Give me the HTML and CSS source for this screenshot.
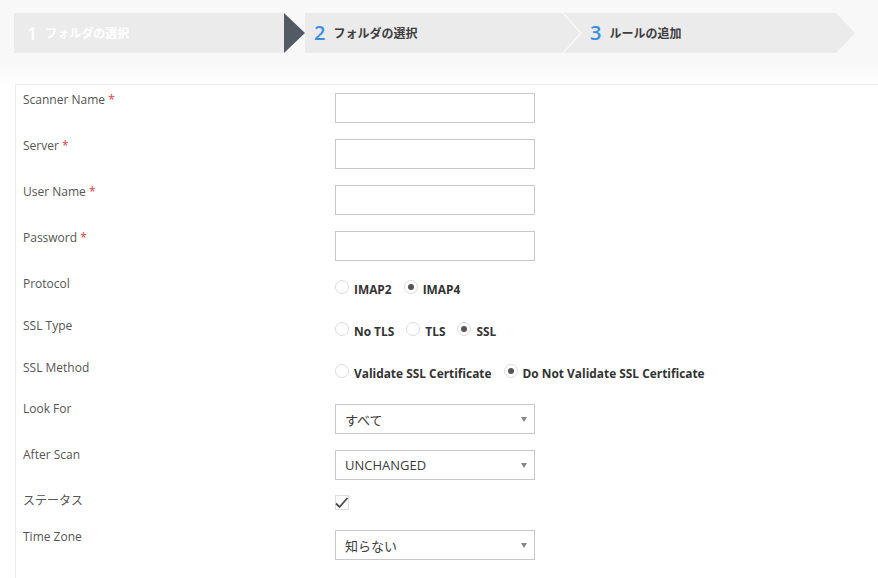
FILE: index.html
```html
<!DOCTYPE html>
<html>
<head>
<meta charset="utf-8">
<link rel="stylesheet" href="styles.css">
</head>
<body>
<div class="top">
  <div class="wizard">
    <div class="step step-done"><span class="num">1</span><span class="txt">フォルダの選択</span></div>
    <div class="tri"></div>
    <div class="step step-active"><span class="num">2</span><span class="txt">フォルダの選択</span></div>
    <div class="step step-next"><span class="num">3</span><span class="txt">ルールの追加</span></div>
  </div>
</div>
<div class="panel">
  <div class="row r-text">
    <div class="label">Scanner Name <span class="req">*</span></div>
    <div class="ctl"><input class="inp" type="text"></div>
  </div>
  <div class="row r-text">
    <div class="label">Server <span class="req">*</span></div>
    <div class="ctl"><input class="inp" type="text"></div>
  </div>
  <div class="row r-text">
    <div class="label">User Name <span class="req">*</span></div>
    <div class="ctl"><input class="inp" type="text"></div>
  </div>
  <div class="row r-text">
    <div class="label">Password <span class="req">*</span></div>
    <div class="ctl"><input class="inp" type="password"></div>
  </div>
  <div class="row r-radio">
    <div class="label">Protocol</div>
    <div class="ctl radios">
      <span class="opt"><span class="radio"></span>IMAP2</span>
      <span class="opt"><span class="radio on"></span>IMAP4</span>
    </div>
  </div>
  <div class="row r-radio">
    <div class="label">SSL Type</div>
    <div class="ctl radios">
      <span class="opt"><span class="radio"></span>No TLS</span>
      <span class="opt"><span class="radio"></span>TLS</span>
      <span class="opt"><span class="radio on"></span>SSL</span>
    </div>
  </div>
  <div class="row r-radio2">
    <div class="label">SSL Method</div>
    <div class="ctl radios">
      <span class="opt"><span class="radio"></span>Validate SSL Certificate</span>
      <span class="opt"><span class="radio on"></span>Do Not Validate SSL Certificate</span>
    </div>
  </div>
  <div class="row r-sel1">
    <div class="label">Look For</div>
    <div class="ctl"><div class="sel"><span>すべて</span><span class="caret"></span></div></div>
  </div>
  <div class="row r-sel2">
    <div class="label">After Scan</div>
    <div class="ctl"><div class="sel"><span>UNCHANGED</span><span class="caret"></span></div></div>
  </div>
  <div class="row r-check">
    <div class="label">ステータス</div>
    <div class="ctl"><div class="check"><svg width="16" height="14" viewBox="0 0 16 14"><path d="M2 7.5 L5.5 11 L13.5 2" fill="none" stroke="#4a4a4a" stroke-width="1.8"/></svg></div></div>
  </div>
  <div class="row r-sel3">
    <div class="label">Time Zone</div>
    <div class="ctl"><div class="sel"><span>知らない</span><span class="caret"></span></div></div>
  </div>
</div>
</body>
</html>
```
FILE: styles.css
```css
* { box-sizing: border-box; }
html, body { margin: 0; padding: 0; background: #fff; }
body {
  font-family: "Open Sans", "Noto Sans CJK JP", sans-serif;
  font-size: 12px;
  color: #555;
  width: 878px;
  height: 578px;
  overflow: hidden;
}
.top {
  height: 84px;
  padding-top: 13px;
  background: linear-gradient(#f8f8f8 0, #f8f8f8 62px, #fefefe 84px);
}
.wizard {
  display: flex;
  margin-left: 14px;
  height: 40px;
}
.step {
  height: 40px;
  background: #ebebeb;
  display: flex;
  align-items: center;
  font-family: "Open Sans", "Noto Sans CJK JP", sans-serif;
  font-weight: 600;
  font-size: 12px;
}
.step .num {
  font-size: 20px;
  font-weight: 600;
  margin-right: 8px;
  line-height: 1;
}
.step-done {
  width: 270px;
  padding-left: 13px;
  color: #fff;
}
.step-done .num { font-size: 18px; color: #fff; }
.tri {
  width: 21px;
  height: 40px;
  background: #525b64;
  clip-path: polygon(0 0, 100% 50%, 0 100%);
}
.step-active {
  width: 275px;
  padding-left: 9px;
  color: #3e3e3e;
  clip-path: polygon(0 0, calc(100% - 18px) 0, 100% 50%, calc(100% - 18px) 100%, 0 100%);
}
.step-active .num, .step-next .num { color: #3a8ee6; }
.step-next {
  width: 291px;
  margin-left: -16px;
  padding-left: 26px;
  color: #3e3e3e;
  clip-path: polygon(0 0, calc(100% - 19px) 0, 100% 50%, calc(100% - 19px) 100%, 0 100%, 18px 50%);
}
.panel {
  margin-left: 15px;
  border-top: 1px solid #ececec;
  border-left: 1px solid #ececec;
  height: 494px;
}
.row {
  display: flex;
  align-items: flex-start;
}
.label {
  width: 319px;
  padding-left: 7px;
  padding-top: 7px;
  line-height: 16px;
  color: #555;
}
.req { color: #e23b3b; }
.ctl { flex: 1; }
.r-text { height: 46px; }
.r-text .ctl { padding-top: 8px; }
.inp {
  display: block;
  width: 200px;
  height: 30px;
  border: 1px solid #c8c8c8;
  border-radius: 0;
  background: #fff;
  margin: 0;
  padding: 0 8px;
}
.r-radio { height: 42px; }
.r-radio2 { height: 41px; }
.radios {
  display: flex;
  padding-top: 13px;
  font-weight: 700;
  font-size: 11.9px;
  color: #333;
  line-height: 14px;
}
.opt {
  display: flex;
  align-items: center;
  margin-right: 12px;
}
.radio {
  width: 14px;
  height: 14px;
  border: 1px solid #dcdcdc;
  border-radius: 50%;
  background: #fff;
  margin-right: 5px;
  position: relative;
  top: -2px;
}
.radio.on::after {
  content: "";
  position: absolute;
  left: 3px;
  top: 3px;
  width: 6px;
  height: 6px;
  border-radius: 50%;
  background: #555;
}
.r-sel1 { height: 46px; }
.r-sel1 .ctl { padding-top: 10px; }
.r-sel2 { height: 46px; }
.r-sel2 .ctl { padding-top: 10px; }
.r-check { height: 36px; }
.r-check .ctl { padding-top: 9px; }
.r-sel3 { height: 40px; }
.r-sel3 .ctl { padding-top: 8px; }
.sel {
  width: 200px;
  height: 30px;
  border: 1px solid #c8c8c8;
  display: flex;
  align-items: center;
  justify-content: space-between;
  padding: 0 7px 0 9px;
  font-size: 13px;
  color: #3c3c3c;
}
.caret {
  width: 0;
  height: 0;
  border-left: 3px solid transparent;
  border-right: 3px solid transparent;
  border-top: 5px solid #888;
}
.check {
  width: 14px;
  height: 15px;
  border: 1px solid #ddd;
  background: #fff;
  display: flex;
  align-items: center;
  justify-content: center;
  overflow: visible;
}
.check svg { flex: none; }
```
